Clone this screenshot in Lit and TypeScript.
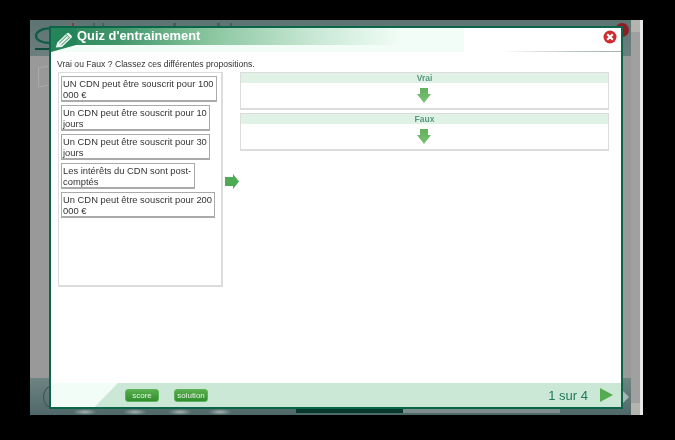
import { LitElement, html, css, svg } from "lit";
import { customElement } from "lit/decorators.js";

const cards = [
  { text: "UN CDN peut être souscrit pour 100 000 €", width: 156 },
  { text: "Un CDN peut être souscrit pour 10 jours", width: 149 },
  { text: "Un CDN peut être souscrit pour 30 jours", width: 149 },
  { text: "Les intérêts du CDN sont post-comptés", width: 134 },
  { text: "Un CDN peut être souscrit pour 200 000 €", width: 154 },
];

const frags = [
  { x: 42, w: 2, c: "#8a3a3a" },
  { x: 63, w: 2, c: "#4a5c5b" },
  { x: 72, w: 2, c: "#4a5c5b" },
  { x: 143, w: 3, c: "#4a5c5b" },
  { x: 187, w: 3, c: "#4a5c5b" },
  { x: 200, w: 2, c: "#4a5c5b" },
];

const arrowDefs = svg`<defs><linearGradient id="g" x1="0" y1="0" x2="0" y2="1"><stop offset="0" stop-color="#62b05c"/><stop offset="1" stop-color="#7ac174"/></linearGradient></defs>`;
const down = html`<svg class="down" width="14" height="15" viewBox="0 0 14 15">${arrowDefs}<path d="M3 0H11V6H14L7 15L0 6H3Z" fill="url(#g)"/></svg>`;

@customElement("app-root")
export class AppRoot extends LitElement {
  static styles = css`
    :host { display: block; width: 675px; height: 440px; background: #000; position: relative; overflow: hidden; font-family: "Liberation Sans", Arial, sans-serif; }
    .shot { position: absolute; inset: 0; filter: blur(0.35px); }
    .desk { position: absolute; left: 30px; top: 20px; width: 613px; height: 395px; display: flex; background: #999; }
    .page { flex: 1; display: flex; flex-direction: column; min-width: 0; }
    .band { height: 36px; background: linear-gradient(#5d7473, #6b7f7e); position: relative; }
    .frag { position: absolute; top: 3px; height: 3px; }
    .mid { flex: 1; background: #999; position: relative; }
    .ghost { position: absolute; left: 8px; top: 10px; width: 14px; height: 18px; border: 1px solid #aaa; transform: skewY(-12deg); }
    .foot { height: 37px; position: relative; background:
      radial-gradient(ellipse 12px 3px at 55px 34px, #a5b3b0, transparent),
      radial-gradient(ellipse 12px 3px at 105px 34px, #a5b3b0, transparent),
      radial-gradient(ellipse 12px 3px at 150px 34px, #a5b3b0, transparent),
      radial-gradient(ellipse 12px 3px at 190px 34px, #a5b3b0, transparent),
      linear-gradient(#6d8482, #50686a); }
    .scroll { width: 9px; background: #a0a0a0; border-right: 3px solid #e8e8e8; display: flex; flex-direction: column; justify-content: space-between; }
    .sb { height: 12px; background: #b4b4ae; }
    .logo { position: absolute; left: 4px; top: 6px; }
    .red { position: absolute; left: 585px; top: 3px; width: 14px; height: 14px; border-radius: 50%; background: #8e1e26; }
    .knob { position: absolute; left: 13px; top: 8px; width: 14px; height: 20px; border-radius: 50%; border: 1px solid #3d5252; }
    .chev { position: absolute; left: 593px; top: 13px; width: 6px; height: 12px; background: #a8b5b3; clip-path: polygon(0 0, 100% 50%, 0 100%); }
    .tb1 { position: absolute; left: 266px; top: 31px; width: 107px; height: 4px; background: #05392b; }
    .tb2 { position: absolute; left: 373px; top: 31px; width: 157px; height: 4px; background: #7d8c8c; }
    .dialog { position: absolute; left: 49px; top: 26px; width: 574px; height: 383px; box-sizing: border-box; border: 2px solid #0b6649; background: #fff; display: flex; flex-direction: column; }
    .head { height: 24px; box-sizing: border-box; flex: none; position: relative; background: #fff; border-bottom: 1px solid; border-image: linear-gradient(90deg, #fff 79%, #b9c4bf 92%, #9fb0a8) 1; }
    .pale { position: absolute; left: 0; top: 0; width: 413px; height: 24px; background: #f2fdf7; }
    .green { position: absolute; left: 0; top: 0; width: 400px; height: 17px; background: linear-gradient(90deg, #25855a 0%, #3f9568 16%, #8ac6a0 40%, #c9e8d5 66%, #f2fdf7 88%); }
    .notch { position: absolute; left: 0; top: 0; width: 26px; height: 24px; background: #25855a; clip-path: polygon(0 0, 100% 0, 100% 70%, 0 100%); }
    .pencil { position: absolute; left: 4px; top: 4px; }
    h1 { position: absolute; left: 26px; top: 0; margin: 0; font-size: 12.9px; line-height: 16px; font-weight: bold; color: #fff; white-space: nowrap; }
    .close { position: absolute; right: 4px; top: 2px; }
    .body { flex: 1; padding: 7px 6px 0 6px; position: relative; min-height: 0; }
    .prompt { font-size: 8.6px; line-height: 11px; color: #333; height: 11px; margin-bottom: 2px; }
    .cols { display: flex; align-items: flex-start; }
    .list { width: 165px; height: 215px; box-sizing: border-box; border: 1px solid #dcdcdc; border-width: 1px 2px 2px 1px; margin-left: 1px; padding: 3px 0 0 2px; display: flex; flex-direction: column; gap: 3px; }
    .card { box-sizing: border-box; height: 26px; border: 1px solid #aaa; border-bottom-width: 2px; padding: 1px 0 0 1px; font-size: 9.4px; line-height: 11px; color: #333; background: #fff; }
    .mover { width: 17px; height: 215px; display: flex; align-items: center; justify-content: center; }
    .mover svg { margin-top: 3px; }
    .zones { width: 369px; display: flex; flex-direction: column; gap: 3px; }
    .zone { box-sizing: border-box; height: 38px; border: 1px solid #dcdcdc; border-bottom-width: 2px; display: flex; flex-direction: column; align-items: center; }
    .ztitle { align-self: stretch; height: 10px; background: #e0f1e6; text-align: center; font-size: 8.5px; line-height: 10px; font-weight: bold; color: #5a9a80; flex: none; }
    .down { margin: 5px 1px 0 0; flex: none; }
    .foot2 { height: 24px; flex: none; background: #cbe8d6; position: relative; display: flex; align-items: center; padding-left: 74px; gap: 15px; }
    .wedge { position: absolute; left: 0; top: 0; width: 67px; height: 24px; background: #f3fdf8; clip-path: polygon(0 0, 100% 0, 65% 100%, 0 100%); }
    .btn { position: relative; width: 34px; height: 13px; box-sizing: border-box; border-radius: 3px; border: 1px solid #5cb35c; background: linear-gradient(#59ad4b, #2f8f2f); font-size: 8px; line-height: 11px; text-align: center; color: #e6f4e6; }
    .count { margin-left: auto; margin-top: 2px; font-size: 13px; color: #1f7a58; line-height: 16px; }
    .play { margin-left: -3px; margin-right: 8px; }
  `;

  render() {
    return html`
      <div class="shot">
        <div class="desk">
          <div class="page">
            <div class="band">
              ${frags.map((f) => html`<div class="frag" style="left:${f.x}px;width:${f.w}px;background:${f.c}"></div>`)}
              <svg class="logo" width="20" height="26" viewBox="0 0 20 26"><path d="M18 2.5C8 1.5 2 6 2 10C2 14 8 17 16 17" fill="none" stroke="#0f5c48" stroke-width="2.4"/><rect x="1" y="22" width="15" height="2" fill="#0f4a3a"/></svg>
              <div class="red"></div>
            </div>
            <div class="mid"><div class="ghost"></div></div>
            <div class="foot"><div class="knob"></div><div class="chev"></div><div class="tb1"></div><div class="tb2"></div></div>
          </div>
          <div class="scroll"><div class="sb"></div><div class="sb"></div></div>
        </div>
        <div class="dialog">
          <div class="head">
            <div class="pale"></div>
            <div class="green"></div>
            <div class="notch"></div>
            <svg class="pencil" width="18" height="16" viewBox="0 0 18 16"><path d="M.8 15.5L2.2 10.4L11.6 1.4C12.4 .6 13.6 .6 14.4 1.4L16.4 3.4C17.2 4.2 17.2 5.3 16.4 6.1L7 15Z" fill="#e6f2ea"/><path d="M4.3 11L12.4 3.4M6.3 13L14.4 5.4" stroke="#3f9568" stroke-width="1" fill="none"/><path d="M10.9 2.2L15.6 6.8" stroke="#3f9568" stroke-width=".8"/></svg>
            <h1>Quiz d'entrainement</h1>
            <svg class="close" width="14" height="14" viewBox="0 0 14 14"><circle cx="7" cy="7" r="6.5" fill="#cf2a2f"/><path d="M4.2 4.2L9.8 9.8M9.8 4.2L4.2 9.8" stroke="#fff" stroke-width="2.2"/></svg>
          </div>
          <div class="body">
            <div class="prompt">Vrai ou Faux ? Classez ces différentes propositions.</div>
            <div class="cols">
              <div class="list">
                ${cards.map((c) => html`<div class="card" style="width:${c.width}px">${c.text}</div>`)}
              </div>
              <div class="mover">
                <svg width="14" height="15" viewBox="0 0 14 15"><path d="M0 3H8V0L14 7.5L8 15V12H0Z" fill="#4faa55"/></svg>
              </div>
              <div class="zones">
                <div class="zone"><div class="ztitle">Vrai</div>${down}</div>
                <div class="zone"><div class="ztitle">Faux</div>${down}</div>
              </div>
            </div>
          </div>
          <div class="foot2">
            <div class="wedge"></div>
            <div class="btn">score</div>
            <div class="btn">solution</div>
            <div class="count">1 sur 4</div>
            <svg class="play" width="13" height="14" viewBox="0 0 13 14"><path d="M0 0L13 7L0 14Z" fill="#55ab4f"/></svg>
          </div>
        </div>
      </div>
    `;
  }
}
